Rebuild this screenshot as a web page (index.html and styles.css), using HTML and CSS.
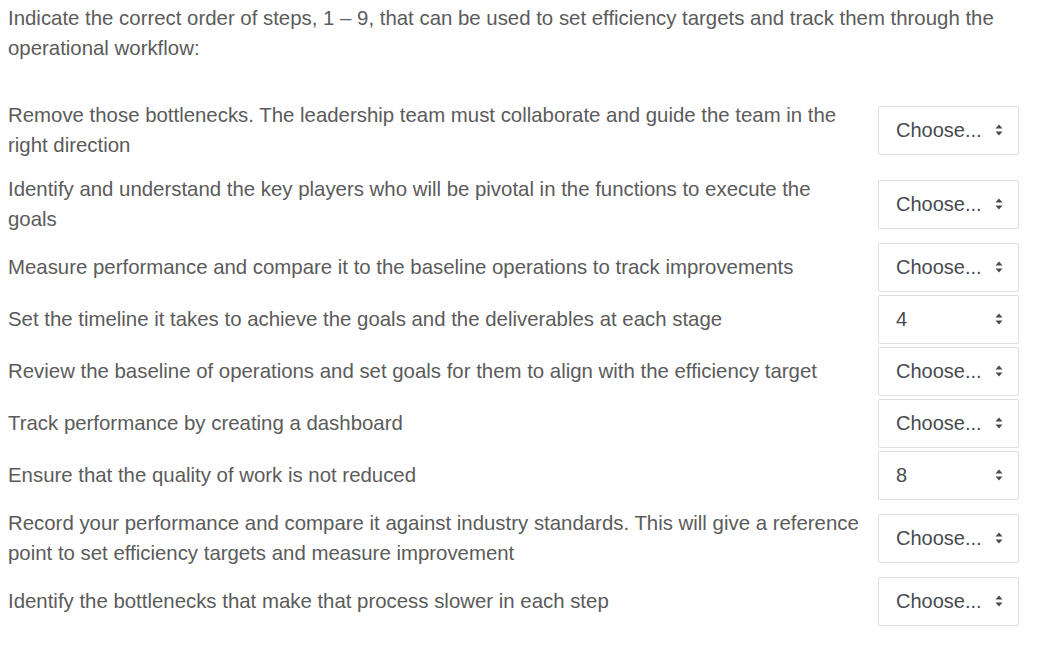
FILE: index.html
```html
<!DOCTYPE html>
<html lang="en">
<head>
<meta charset="utf-8">
<title>Order of steps</title>
<link rel="stylesheet" href="styles.css">
</head>
<body>
<div class="question">
  <p class="prompt">Indicate the correct order of steps, 1 – 9, that can be used to set efficiency targets and track them through the operational workflow:</p>
  <div class="answers">
    <div class="row">
      <div class="stem">Remove those bottlenecks. The leadership team must collaborate and guide the team in the<br>right direction</div>
      <div class="ctrl"><span class="sel"><select><option>Choose...</option></select><svg class="arrows" viewBox="0 0 8 12" width="8" height="12"><path d="M4 0.5 L7.5 4.5 H0.5 Z M4 11.5 L7.5 7.5 H0.5 Z"/></svg></span></div>
    </div>
    <div class="row">
      <div class="stem">Identify and understand the key players who will be pivotal in the functions to execute the<br>goals</div>
      <div class="ctrl"><span class="sel"><select><option>Choose...</option></select><svg class="arrows" viewBox="0 0 8 12" width="8" height="12"><path d="M4 0.5 L7.5 4.5 H0.5 Z M4 11.5 L7.5 7.5 H0.5 Z"/></svg></span></div>
    </div>
    <div class="row">
      <div class="stem">Measure performance and compare it to the baseline operations to track improvements</div>
      <div class="ctrl"><span class="sel"><select><option>Choose...</option></select><svg class="arrows" viewBox="0 0 8 12" width="8" height="12"><path d="M4 0.5 L7.5 4.5 H0.5 Z M4 11.5 L7.5 7.5 H0.5 Z"/></svg></span></div>
    </div>
    <div class="row">
      <div class="stem">Set the timeline it takes to achieve the goals and the deliverables at each stage</div>
      <div class="ctrl"><span class="sel"><select><option>4</option></select><svg class="arrows" viewBox="0 0 8 12" width="8" height="12"><path d="M4 0.5 L7.5 4.5 H0.5 Z M4 11.5 L7.5 7.5 H0.5 Z"/></svg></span></div>
    </div>
    <div class="row">
      <div class="stem">Review the baseline of operations and set goals for them to align with the efficiency target</div>
      <div class="ctrl"><span class="sel"><select><option>Choose...</option></select><svg class="arrows" viewBox="0 0 8 12" width="8" height="12"><path d="M4 0.5 L7.5 4.5 H0.5 Z M4 11.5 L7.5 7.5 H0.5 Z"/></svg></span></div>
    </div>
    <div class="row">
      <div class="stem">Track performance by creating a dashboard</div>
      <div class="ctrl"><span class="sel"><select><option>Choose...</option></select><svg class="arrows" viewBox="0 0 8 12" width="8" height="12"><path d="M4 0.5 L7.5 4.5 H0.5 Z M4 11.5 L7.5 7.5 H0.5 Z"/></svg></span></div>
    </div>
    <div class="row">
      <div class="stem">Ensure that the quality of work is not reduced</div>
      <div class="ctrl"><span class="sel"><select><option>8</option></select><svg class="arrows" viewBox="0 0 8 12" width="8" height="12"><path d="M4 0.5 L7.5 4.5 H0.5 Z M4 11.5 L7.5 7.5 H0.5 Z"/></svg></span></div>
    </div>
    <div class="row">
      <div class="stem">Record your performance and compare it against industry standards. This will give a reference<br>point to set efficiency targets and measure improvement</div>
      <div class="ctrl"><span class="sel"><select><option>Choose...</option></select><svg class="arrows" viewBox="0 0 8 12" width="8" height="12"><path d="M4 0.5 L7.5 4.5 H0.5 Z M4 11.5 L7.5 7.5 H0.5 Z"/></svg></span></div>
    </div>
    <div class="row">
      <div class="stem">Identify the bottlenecks that make that process slower in each step</div>
      <div class="ctrl"><span class="sel"><select><option>Choose...</option></select><svg class="arrows" viewBox="0 0 8 12" width="8" height="12"><path d="M4 0.5 L7.5 4.5 H0.5 Z M4 11.5 L7.5 7.5 H0.5 Z"/></svg></span></div>
    </div>
  </div>
</div>
</body>
</html>
```
FILE: styles.css
```css
html, body {
  margin: 0;
  padding: 0;
  background: #ffffff;
}
body {
  font-family: "Liberation Sans", Arial, Helvetica, sans-serif;
  font-size: 20.4px;
  line-height: 30px;
  color: #5b5b5b;
}
.question {
  padding: 3px 8px 0 8px;
}
.prompt {
  margin: 0 0 30px 0;
  width: 1040px;
}
.answers {
  display: flex;
  flex-direction: column;
}
.row {
  display: flex;
  align-items: center;
}
.stem {
  width: 868px;
  padding: 7px 0;
  white-space: nowrap;
}
.ctrl {
  margin-left: 2px;
  padding: 1.5px 0;
}
.sel {
  position: relative;
  display: block;
  width: 141px;
  height: 49px;
}
.sel select {
  appearance: none;
  -webkit-appearance: none;
  width: 141px;
  height: 49px;
  margin: 0;
  padding: 0 0 0 17px;
  border: 1px solid #dcdfe3;
  border-radius: 2px;
  background: #ffffff;
  font-family: "Liberation Sans", Arial, Helvetica, sans-serif;
  font-size: 20px;
  color: #464b50;
}
.arrows {
  position: absolute;
  right: 16px;
  top: 18px;
  fill: #464b50;
  pointer-events: none;
}
```
